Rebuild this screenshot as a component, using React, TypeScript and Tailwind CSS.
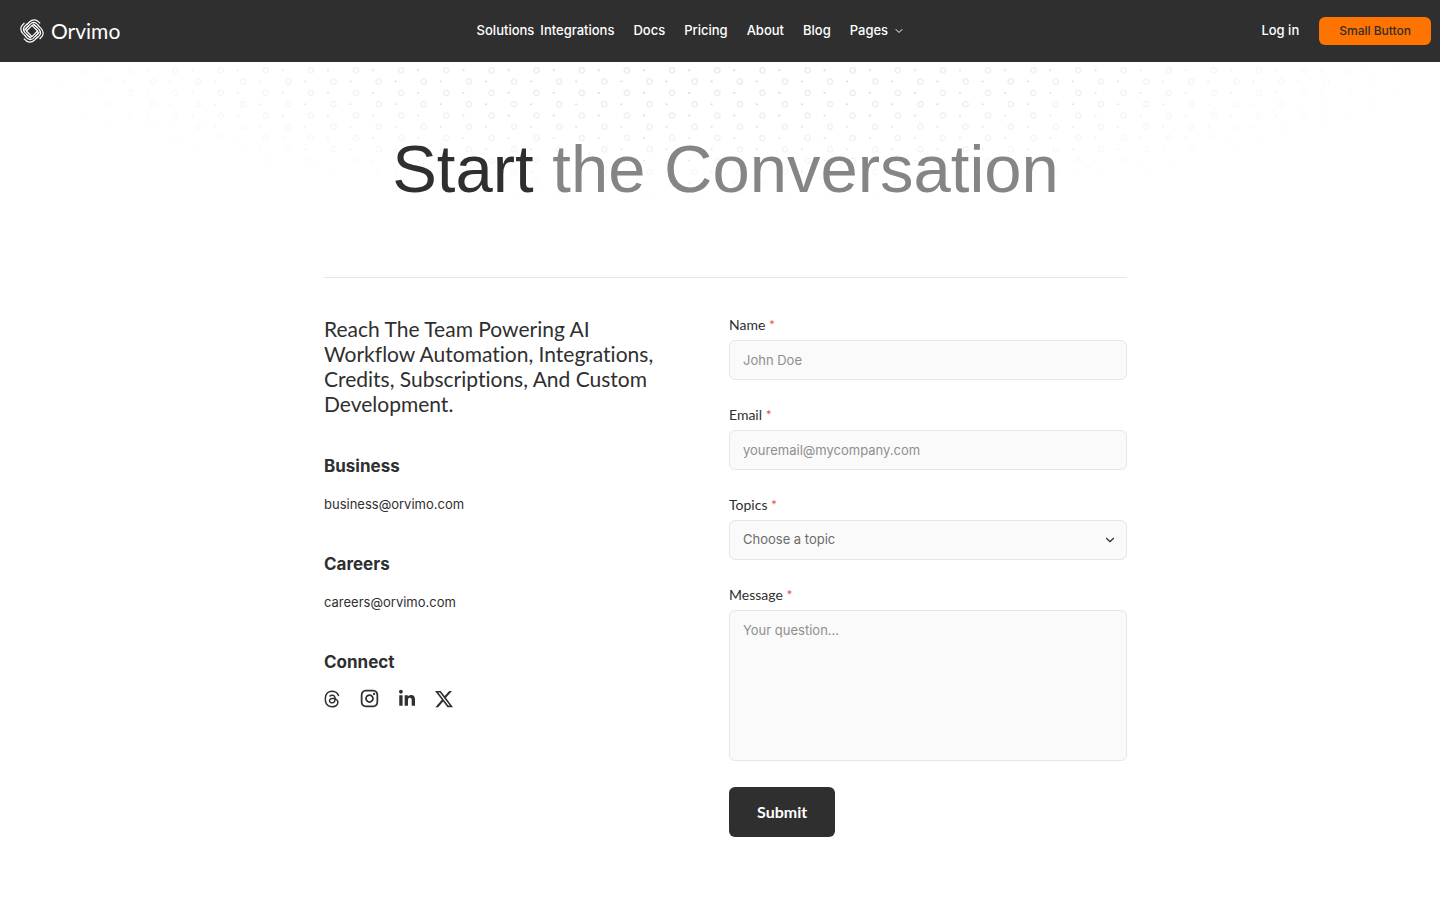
import { useState } from 'react';
import { ChevronDown } from 'lucide-react';
import { FaLinkedinIn, FaThreads, FaXTwitter } from 'react-icons/fa6';
import { RiInstagramLine } from 'react-icons/ri';

const navLinks = ['Docs', 'Pricing', 'About', 'Blog'];

const contacts = [
  { title: 'Business', email: 'business@orvimo.com' },
  { title: 'Careers', email: 'careers@orvimo.com' },
];

const socials = [
  { label: 'Threads', Icon: FaThreads, size: 'h-5 w-4' },
  { label: 'Instagram', Icon: RiInstagramLine, size: 'size-[21px]' },
  { label: 'LinkedIn', Icon: FaLinkedinIn, size: 'h-5 w-4' },
  { label: 'X', Icon: FaXTwitter, size: 'size-5' },
];

const fieldClass =
  "block w-full rounded-md border border-[#e6e6e6] bg-[#fafafa] px-[13px] font-['Inter',sans-serif] text-[13px] outline-none placeholder:text-[#8f8f8f] focus:border-[#999999]";

const LogoMark = () => (
  <svg className="size-6" viewBox="0 0 24 24" fill="none" stroke="currentColor" strokeWidth="1.2" aria-hidden="true">
    {[0, 90, 180, 270].map((angle) => (
      <g key={angle} transform={`rotate(${angle} 12 12)`}>
        <path d="M6.4 6 9.4 3Q13-.4 17 1.6L20.2 4.4" />
        <path d="M4.6 10.8 10.8 4.6Q13.6 2.4 16.4 4.4L19 7" />
        <path d="M6.4 12 12 6.4Q13.6 5.2 15.2 6.4L17.6 8.8" />
      </g>
    ))}
  </svg>
);

// Ring and dot pattern that fades out towards the sides and the bottom
const HeroPattern = () => (
  <svg className="absolute inset-x-0 top-0 h-36 w-full" aria-hidden="true">
    <defs>
      <pattern id="dots" x="7" y="2.6" width="45.15" height="22.6" patternUnits="userSpaceOnUse">
        <circle cx="33" cy="5.7" r="2.7" fill="none" stroke="#c6c6c6" strokeWidth="0.6" />
        <circle cx="4.9" cy="5.7" r="0.7" fill="#a3a3a3" />
        <circle cx="10.4" cy="17" r="2.7" fill="none" stroke="#c6c6c6" strokeWidth="0.6" />
        <circle cx="27.4" cy="17" r="0.7" fill="#a3a3a3" />
      </pattern>
      <radialGradient id="fade" cx="0.5" cy="0" r="1" gradientTransform="translate(0.25 0) scale(0.5 1)">
        <stop offset="0" stopColor="#fff" />
        <stop offset="0.5" stopColor="#fff" stopOpacity="0.7" />
        <stop offset="1" stopColor="#fff" stopOpacity="0" />
      </radialGradient>
      <mask id="fade-mask">
        <rect width="100%" height="100%" fill="url(#fade)" />
      </mask>
    </defs>
    <rect width="100%" height="100%" fill="url(#dots)" mask="url(#fade-mask)" />
  </svg>
);

const Header = () => (
  <header className="flex items-center justify-between bg-[#2f2f2f] py-4 pr-[9px] pl-5 text-[13px] font-medium text-white">
    <a href="#" className="flex items-center gap-[7px]">
      <LogoMark />
      <span className="font-['Lato',sans-serif] text-[21px] leading-[30px] font-normal">Orvimo</span>
    </a>
    <nav className="flex items-center gap-[19px]">
      <div className="flex gap-[6px]">
        <a href="#">Solutions</a>
        <a href="#">Integrations</a>
      </div>
      {navLinks.map((link) => (
        <a key={link} href="#">
          {link}
        </a>
      ))}
      <button type="button" className="flex items-center gap-[5px]">
        Pages
        <ChevronDown className="size-3" />
      </button>
    </nav>
    <div className="flex items-center gap-5">
      <a href="#">Log in</a>
      <button type="button" className="h-7 rounded-md bg-[#ff7300] px-5 text-[12px] text-[#2f2f2f]">
        Small Button
      </button>
    </div>
  </header>
);

const Label = ({ htmlFor, children }: { htmlFor: string; children: string }) => (
  <label htmlFor={htmlFor} className="mb-[6px] block font-['Lato',sans-serif] text-[14px] leading-[18px]">
    {children} <span className="text-[#f0483e]">*</span>
  </label>
);

const ContactForm = () => {
  const [topic, setTopic] = useState('');

  return (
    <form className="flex flex-col items-start gap-[26px]" onSubmit={(e) => e.preventDefault()}>
      <div className="w-full">
        <Label htmlFor="name">Name</Label>
        <input id="name" type="text" placeholder="John Doe" className={`${fieldClass} h-10`} />
      </div>
      <div className="w-full">
        <Label htmlFor="email">Email</Label>
        <input id="email" type="email" placeholder="youremail@mycompany.com" className={`${fieldClass} h-10`} />
      </div>
      <div className="w-full">
        <Label htmlFor="topic">Topics</Label>
        <div className="relative">
          <select
            id="topic"
            value={topic}
            onChange={(e) => setTopic(e.target.value)}
            className={`${fieldClass} h-10 appearance-none text-[#6b6b6b]`}
          >
            <option value="">Choose a topic</option>
            <option value="sales">Sales</option>
            <option value="support">Support</option>
          </select>
          <ChevronDown className="pointer-events-none absolute top-1/2 right-[10px] size-[14px] -translate-y-1/2" />
        </div>
      </div>
      <div className="w-full">
        <Label htmlFor="message">Message</Label>
        <textarea
          id="message"
          placeholder="Your question..."
          className={`${fieldClass} h-[151px] resize-none py-[9px] leading-5`}
        />
      </div>
      <button
        type="submit"
        className="h-[50px] rounded-md bg-[#2f2f2f] px-7 font-['Lato',sans-serif] text-[16px] font-bold text-white"
      >
        Submit
      </button>
    </form>
  );
};

const App = () => (
  <div className="min-h-screen bg-white font-['Inter',sans-serif] text-[#2f2f2f] [font-variant-ligatures:none]">
    <Header />
    <main className="relative pl-[11px]">
      <HeroPattern />
      <div className="relative mx-auto max-w-[803px] pb-16">
        <h1 className="border-b border-[#e6e6e6] pt-[67px] pb-[68px] text-center font-['Liberation_Sans',sans-serif] text-[67px] leading-[80px] text-[#858585]">
          <span className="text-[#2f2f2f]">Start</span> the Conversation
        </h1>
        <div className="grid grid-cols-1 gap-y-12 pt-[38px] md:grid-cols-2 md:gap-x-[7px]">
          <div className="flex flex-col gap-[38px]">
            <p className="max-w-[340px] font-['Lato',sans-serif] text-[21px] leading-[25px]">
              Reach The Team Powering AI Workflow Automation, Integrations, Credits, Subscriptions, And Custom
              Development.
            </p>
            {contacts.map((contact) => (
              <section key={contact.title}>
                <h2 className="mb-4 text-[17px] leading-6 font-bold">{contact.title}</h2>
                <a href={`mailto:${contact.email}`} className="block text-[13px] leading-5">
                  {contact.email}
                </a>
              </section>
            ))}
            <section>
              <h2 className="mb-[14px] text-[17px] leading-6 font-bold">Connect</h2>
              <div className="flex items-center gap-[19px]">
                {socials.map(({ label, Icon, size }) => (
                  <a key={label} href="#" aria-label={label}>
                    <Icon className={size} />
                  </a>
                ))}
              </div>
            </section>
          </div>
          <ContactForm />
        </div>
      </div>
    </main>
  </div>
);

export default App;
